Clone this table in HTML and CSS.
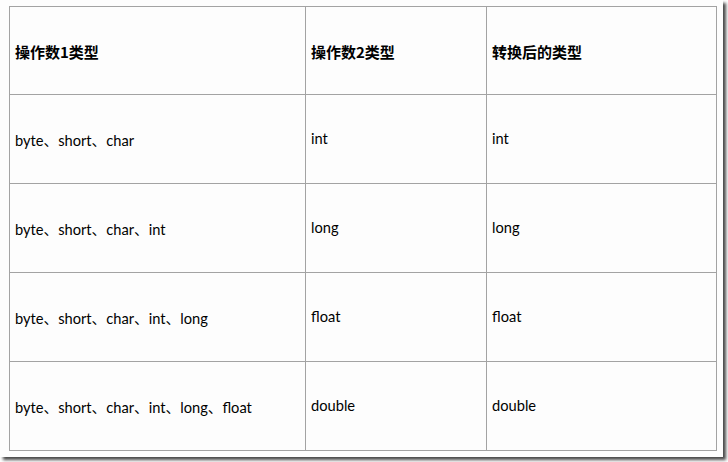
FILE: index.html
```html
<!DOCTYPE html>
<html>
<head>
<meta charset="utf-8">
<link rel="stylesheet" href="styles.css">
</head>
<body>
<div class="frame">
  <table class="conv">
    <colgroup>
      <col class="c1"><col class="c2"><col class="c3">
    </colgroup>
    <tr class="head">
      <th>操作数1类型</th>
      <th>操作数2类型</th>
      <th>转换后的类型</th>
    </tr>
    <tr>
      <td class="first">byte、short、char</td>
      <td>int</td>
      <td>int</td>
    </tr>
    <tr>
      <td class="first">byte、short、char、int</td>
      <td>long</td>
      <td>long</td>
    </tr>
    <tr>
      <td class="first">byte、short、char、int、long</td>
      <td>float</td>
      <td>float</td>
    </tr>
    <tr>
      <td class="first">byte、short、char、int、long、float</td>
      <td>double</td>
      <td>double</td>
    </tr>
  </table>
</div>
</body>
</html>
```
FILE: styles.css
```css
html, body {
  margin: 0;
  padding: 0;
  background: #ffffff;
}
body {
  width: 728px;
  height: 462px;
  overflow: hidden;
}
.frame {
  width: 723px;
  height: 457px;
  background: #fdfdfd;
  box-shadow: 3px 3px 3px #4a4a4a;
  padding: 6px 0 0 9px;
  box-sizing: border-box;
}
.conv {
  border-collapse: collapse;
  table-layout: fixed;
  width: 707px;
  font-family: Lato, "Noto Sans CJK SC", sans-serif;
  font-size: 14.67px;
  color: #000;
}
.c1 { width: 296px; }
.c2 { width: 181px; }
.c3 { width: 230px; }
.conv th, .conv td {
  border: 1px solid #a3a3a3;
  height: 89px;
  padding: 0 0 2px 5px;
  text-align: left;
  vertical-align: middle;
  box-sizing: border-box;
}
.conv th {
  height: 88px;
  font-family: "Noto Sans CJK SC", sans-serif;
  font-weight: 700;
  font-size: 15px;
  padding: 2px 0 0 5px;
}
.conv td.first {
  padding: 0 0 0 5px;
}
```
